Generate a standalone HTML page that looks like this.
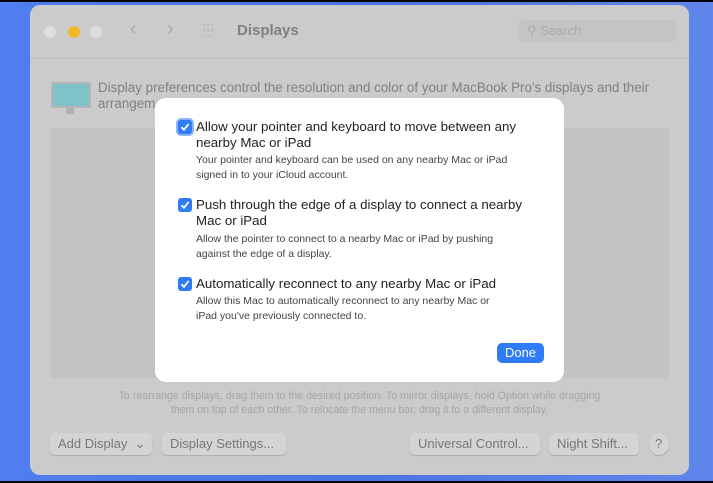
<!DOCTYPE html><html><head><style>
*{margin:0;padding:0;box-sizing:border-box}
body{width:713px;height:483px;background:#000;position:relative;overflow:hidden;font-family:"Liberation Sans",sans-serif}
.bg{position:absolute;left:0;top:2px;width:713px;height:479px;background:linear-gradient(90deg,#4f7ef0,#4a74e4 50%,#5f86ea)}
.win{position:absolute;left:30px;top:5px;width:659px;height:470px;background:#cbcbcd;border-radius:10px}
.t{position:absolute;white-space:nowrap}
.dot{position:absolute;top:21px;width:12px;height:12px;border-radius:50%}
.panel{position:absolute;left:20px;top:123px;width:619px;height:250px;background:#c3c3c5;border-radius:4px}
.btn{position:absolute;top:433px;height:22px;background:#d4d4d6;border-radius:5px;box-shadow:0 1px 1px #aaa;font-size:13px;color:#777;padding:4px 8px;white-space:nowrap;line-height:14px}
.dlg{position:absolute;left:155px;top:98px;width:409px;height:284px;background:#fff;border-radius:11px}
.cb{position:absolute;left:23px;width:14px;height:14px;background:#2f7cf6;border-radius:3px}
.cb svg{position:absolute;left:2px;top:2px}
.h{position:absolute;left:41px;font-size:13.3px;color:#222;line-height:16px;white-space:nowrap}
.s{position:absolute;left:41px;font-size:10.5px;color:#444;line-height:15px;white-space:nowrap}
</style></head><body>
<div class="bg"></div>
<div class="win">
<div class="dot" style="left:14px;background:#dedee0"></div>
<div class="dot" style="left:38px;background:#f2b52c"></div>
<div class="dot" style="left:60px;background:#dedee0"></div>
<div class="t" style="left:100px;top:13px;font-size:20px;color:#a9a9ab">&lsaquo;</div>
<div class="t" style="left:137px;top:13px;font-size:20px;color:#a9a9ab">&rsaquo;</div>
<div class="t" style="left:173px;top:20px;font-size:10px;color:#999;letter-spacing:1px;line-height:6px">:::<br>:::</div>
<div class="t" style="left:207px;top:17px;font-size:15px;font-weight:bold;color:#808082">Displays</div>
<div style="position:absolute;left:488px;top:15px;width:158px;height:22px;background:#c4c4c6;border-radius:5px"></div>
<div class="t" style="left:497px;top:18px;font-size:13px;color:#aaa">&#9906;&nbsp;Search</div>
<div style="position:absolute;left:0;top:53px;width:659px;height:1px;background:#bdbdbf"></div>
<div style="position:absolute;left:21px;top:77px;width:40px;height:26px;background:#7fc2c8;border:2px solid #b5b5b7"></div>
<div style="position:absolute;left:36px;top:103px;width:8px;height:6px;background:#b0b0b2"></div>
<div class="t" style="left:68px;top:75px;font-size:13.4px;color:#808082;line-height:16px">Display preferences control the resolution and color of your MacBook Pro's displays and their<br>arrangem</div>
<div class="panel"></div>
<div class="t" style="left:0;width:659px;top:384px;font-size:10.6px;color:#a5a5a7;text-align:center;line-height:14px">To rearrange displays, drag them to the desired position. To mirror displays, hold Option while dragging<br>them on top of each other. To relocate the menu bar, drag it to a different display.</div>
</div>
<div class="btn" style="left:50px;width:102px">Add Display &nbsp;&#8964;</div>
<div class="btn" style="left:162px;width:124px">Display Settings...</div>
<div class="btn" style="left:410px;width:130px">Universal Control...</div>
<div class="btn" style="left:549px;width:90px">Night Shift...</div>
<div class="btn" style="left:649px;width:20px;border-radius:50%;padding:4px 6px">?</div>
<div class="dlg">
<div class="cb" style="top:22px;box-shadow:0 0 0 2px #8ab4f5"><svg width="10" height="10" viewBox="0 0 10 10"><path d="M1.5 5.2L4 7.8 8.6 2" stroke="#fff" stroke-width="1.8" fill="none"/></svg></div>
<div class="h" style="top:21px">Allow your pointer and keyboard to move between any<br>nearby Mac or iPad</div>
<div class="s" style="top:55px">Your pointer and keyboard can be used on any nearby Mac or iPad<br>signed in to your iCloud account.</div>
<div class="cb" style="top:100px"><svg width="10" height="10" viewBox="0 0 10 10"><path d="M1.5 5.2L4 7.8 8.6 2" stroke="#fff" stroke-width="1.8" fill="none"/></svg></div>
<div class="h" style="top:99px">Push through the edge of a display to connect a nearby<br>Mac or iPad</div>
<div class="s" style="top:134px">Allow the pointer to connect to a nearby Mac or iPad by pushing<br>against the edge of a display.</div>
<div class="cb" style="top:179px"><svg width="10" height="10" viewBox="0 0 10 10"><path d="M1.5 5.2L4 7.8 8.6 2" stroke="#fff" stroke-width="1.8" fill="none"/></svg></div>
<div class="h" style="top:178px">Automatically reconnect to any nearby Mac or iPad</div>
<div class="s" style="top:196px">Allow this Mac to automatically reconnect to any nearby Mac or<br>iPad you've previously connected to.</div>
<div style="position:absolute;left:342px;top:245px;width:47px;height:20px;background:#2f7cf6;border-radius:5px;color:#fff;font-size:13px;text-align:center;line-height:20px">Done</div>
</div>
</body></html>
